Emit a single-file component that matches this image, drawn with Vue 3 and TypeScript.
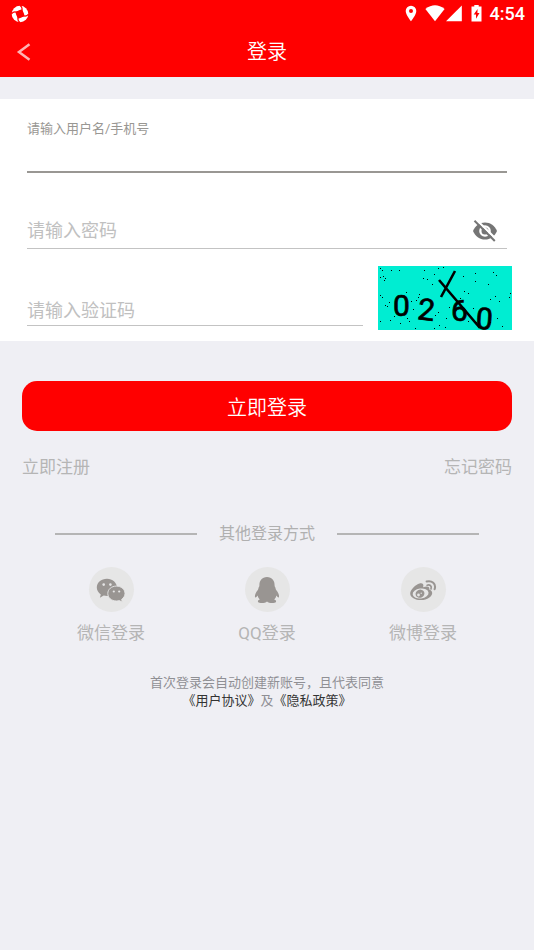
<script setup lang="ts">
import { ref } from 'vue'

const account = ref('')
const password = ref('')
const code = ref('')
const showPassword = ref(false)

const specks: number[][] = [
  [2, 2], [4, 4], [13, 4], [21, 4], [46, 4], [60, 2], [65, 1], [5, 10], [2, 11], [7, 12], [6, 14],
  [45, 12], [49, 13], [54, 18], [56, 8], [85, 10], [97, 7], [97, 15], [115, 6], [118, 9], [110, 18],
  [86, 25], [90, 27], [112, 33], [117, 30], [121, 35], [132, 27], [131, 31], [2, 29], [4, 31],
  [7, 39], [11, 36], [9, 40], [2, 55], [12, 54], [16, 50], [21, 49], [22, 57], [29, 52], [31, 55],
  [37, 62], [28, 26], [41, 28], [40, 31], [33, 35], [38, 34], [43, 38], [60, 46], [57, 49], [61, 59],
  [67, 61], [68, 52], [95, 42], [88, 45], [119, 52], [124, 60], [112, 56], [98, 56], [71, 41],
  [35, 43], [64, 18], [82, 32], [56, 62], [90, 55],
]

const providers = [
  { id: 'wechat', name: '微信登录' },
  { id: 'qq', name: 'QQ登录' },
  { id: 'weibo', name: '微博登录' },
]
</script>

<template>
  <div class="page">
    <header class="top">
      <div class="status">
        <svg class="app-mark" width="18" height="18" viewBox="0 0 18 18" aria-hidden="true">
          <circle cx="9" cy="9" r="8.300" fill="#fff" />
          <path d="M11.200 4.700L13.300 11.200 6.800 13.300 4.700 6.800Z" fill="#f00" />
          <path v-for="turn in [0, 90, 180, 270]" :key="turn" :transform="`rotate(${turn} 9 9)`" d="M5.500 7L11 4.900Q11.600 2.200 8.800 .2" fill="none" stroke="#f00" stroke-width="1.200" />
        </svg>
        <div class="signals">
          <svg width="12" height="17" viewBox="0 0 12 17" aria-hidden="true"><path d="M6 0.8A5.3 5.3 0 0 0 .7 6.1C.7 10 6 16.3 6 16.3S11.3 10 11.3 6.1A5.3 5.3 0 0 0 6 .8ZM6 8.1A2 2 0 1 1 6 4.1 2 2 0 0 1 6 8.1Z" fill="#fff" /></svg>
          <svg class="wifi" width="20" height="17" viewBox="0 0 20 17" aria-hidden="true"><path d="M.4 4.1Q10-3.4 19.6 4.1L10 16.2Z" fill="#fff" /></svg>
          <svg class="cell" width="16" height="17" viewBox="0 0 16 17" aria-hidden="true"><path d="M15.8.5V16.3H0Z" fill="#fff" /></svg>
          <svg class="battery" width="11" height="17" viewBox="0 0 11 17" aria-hidden="true"><path d="M3.3 0H7.7V1.6H10.5V16.5H.5V1.6H3.3Z" fill="#fff" /><path d="M6.6 4.1L2.7 9.5H5V13.8L8.5 8.1H6.4Z" fill="#f00" /></svg>
          <span class="clock">4:54</span>
        </div>
      </div>
      <div class="bar">
        <button class="back" type="button" aria-label="返回">
          <svg width="15" height="18" viewBox="0 0 15 18" aria-hidden="true"><path d="M13.500 1.300L3 9 13.500 16.700" fill="none" stroke="#fff" stroke-opacity=".7" stroke-width="2.500" /></svg>
        </button>
        <h1>登录</h1>
      </div>
    </header>

    <form @submit.prevent>
      <section class="card">
        <div class="field account">
          <label for="account">请输入用户名/手机号</label>
          <input id="account" v-model="account" type="text" autocomplete="username">
        </div>
        <div class="field overlay password">
          <label v-show="!password" for="password">请输入密码</label>
          <input id="password" v-model="password" :type="showPassword ? 'text' : 'password'" autocomplete="current-password">
          <button class="eye" type="button" aria-label="显示密码" @click="showPassword = !showPassword">
            <svg width="26" height="22" viewBox="0 0 26 22" aria-hidden="true">
              <path d="M1 11C3 5.8 7.8 2.4 13 2.4S23 5.8 25 11C23 16.2 18.2 19.6 13 19.6S3 16.2 1 11Z" fill="#757575" />
              <circle cx="13" cy="11" r="5.8" fill="#fff" />
              <circle cx="13" cy="11" r="3.5" fill="#757575" />
              <path d="M4.200-.4L24.600 19.600" stroke="#fff" stroke-width="2.2" />
              <path d="M2.500.7L22.800 21" stroke="#757575" stroke-width="2" />
            </svg>
          </button>
        </div>
        <div class="verify">
          <div class="field overlay">
            <label v-show="!code" for="code">请输入验证码</label>
            <input id="code" v-model="code" type="text" autocomplete="off">
          </div>
          <button class="captcha" type="button" aria-label="换一张验证码">
            <svg width="134" height="64" viewBox="0 0 134 64">
              <rect width="134" height="64" fill="#00edd2" />
              <rect v-for="(s, i) in specks" :key="i" :x="s[0]" :y="s[1]" width="1" height="1" />
              <g class="digits">
                <text x="15" y="50">0</text>
                <text x="40" y="54" transform="rotate(7 48 43)">2</text>
                <text x="73" y="55">6</text>
                <text x="98" y="63" transform="rotate(4 106 53)">0</text>
              </g>
              <path d="M61 14L102 62M77 5L63 31" fill="none" stroke="#000" stroke-width="2.6" />
            </svg>
          </button>
        </div>
      </section>

      <section class="actions">
        <button class="submit" type="submit">立即登录</button>
        <div class="links">
          <a href="#register">立即注册</a>
          <a href="#forgot">忘记密码</a>
        </div>
      </section>
    </form>

    <section class="other">
      <h2>其他登录方式</h2>
      <div class="providers">
        <button v-for="p in providers" :key="p.id" type="button">
          <span class="disc">
            <svg v-if="p.id === 'wechat'" width="30" height="26" viewBox="0 0 30 26" aria-hidden="true">
              <path d="M11 1.800C5.200 1.800.8 5.700.8 10.600c0 2.900 1.500 5.100 4 6.800L3.900 20.700l3.800-2.100c1.100.3 2.200.5 3.500.5C17 19.100 21 15.400 21 10.600S16.500 1.800 11 1.800Z" fill="#999592" />
              <circle cx="7.700" cy="7.600" r="1.300" fill="#e6e6e6" /><circle cx="14.400" cy="7.600" r="1.300" fill="#e6e6e6" />
              <path d="M20.400 9.100c-4.900 0-8.600 3.200-8.600 7.400s3.700 7.500 8.600 7.500c1.100 0 2-.1 2.900-.4l3.100 1.500-.8-2.700c2-1.500 3.400-3.500 3.400-5.900 0-4.200-3.900-7.400-8.600-7.400Z" fill="#999592" stroke="#e6e6e6" stroke-width=".9" />
              <circle cx="17.800" cy="14.500" r="1.100" fill="#e6e6e6" /><circle cx="23.200" cy="14.500" r="1.100" fill="#e6e6e6" />
            </svg>
            <svg v-else-if="p.id === 'qq'" width="26" height="28" viewBox="0 0 26 28" aria-hidden="true">
              <path d="M13 1C8 1 5.300 4.700 5.400 9.400c0 1-.4 1.600-.9 2.400-.2.700 0 1.100-.5 1.900C1.700 16.400.6 19.100 1 21c.3 1.200 1.600.1 2.500-1.500.4 1.600 1.200 2.900 2.300 3.900-1.600.5-2.300 1.500-1.700 2.600.7 1.300 6.900 1.700 8.900-.6 2 2.300 8.200 1.900 8.900.6.600-1.100-.1-2.100-1.700-2.600 1.100-1 1.900-2.300 2.300-3.900.9 1.600 2.200 2.700 2.500 1.500.4-1.900-.7-4.600-3-7.300-.5-.8-.3-1.200-.5-1.900-.5-.8-.9-1.400-.9-2.400C20.700 4.700 18 1 13 1Z" fill="#999592" />
            </svg>
            <svg v-else width="28" height="24" viewBox="0 0 28 24" aria-hidden="true">
              <path d="M10.500 5.400C6.800 6.300 1.200 11.600 1.200 15.400c0 4 5 6.600 10.700 6.600 6.700 0 11.300-3.700 11.300-7.100 0-2-1.500-3-3-3.500.8-2.800-1.700-3.900-6.100-2.200 1-2.900-.5-4.600-3.600-3.800Z" fill="#999592" />
              <ellipse cx="11.600" cy="15.500" rx="8" ry="5" transform="rotate(-8 11.600 15.500)" fill="#e6e6e6" />
              <ellipse cx="11" cy="15.700" rx="4.500" ry="4" transform="rotate(-22 11 15.700)" fill="#999592" />
              <circle cx="9.500" cy="17" r="1.400" fill="#e6e6e6" /><circle cx="12.200" cy="15.200" r=".7" fill="#e6e6e6" />
              <path d="M17.600 3.500C22.800 2 27.500 5.900 25.600 11.200" fill="none" stroke="#999592" stroke-width="2" stroke-linecap="round" />
              <path d="M18.100 7.200C21 6.300 23 8.200 22 10.900" fill="none" stroke="#999592" stroke-width="1.700" stroke-linecap="round" />
            </svg>
          </span>
          <span>{{ p.name }}</span>
        </button>
      </div>
      <p class="terms">
        首次登录会自动创建新账号，且代表同意<br>
        <a href="#agreement">《用户协议》</a>及<a href="#privacy">《隐私政策》</a>
      </p>
    </section>
  </div>
</template>

<style>
body {
  background: #efeff4;
}
</style>

<style scoped>
.page {
  min-height: 100vh;
  background: #efeff4;
  font-family: Roboto, "Noto Sans CJK SC", sans-serif;
}
.page * {
  box-sizing: border-box;
}
button {
  padding: 0;
  border: 0;
  background: none;
  font: inherit;
  cursor: pointer;
}
a {
  color: inherit;
  text-decoration: none;
}
svg {
  display: block;
}
.top {
  background: #f00;
  color: #fff;
}
.status {
  display: flex;
  justify-content: space-between;
  align-items: center;
  height: 27px;
  padding: 0 9px 0 11px;
}
.signals {
  display: flex;
  align-items: center;
}
.wifi {
  margin-left: 8px;
}
.cell {
  margin-left: 1px;
}
.battery {
  margin: 0 8px 0 9px;
}
.clock {
  font-size: 18px;
  font-weight: 500;
  line-height: 27px;
}
.bar {
  display: grid;
  grid-template-columns: 48px 1fr 48px;
  align-items: center;
  height: 50px;
}
.back {
  padding: 16px;
}
h1 {
  margin: 0;
  font-size: 20px;
  font-weight: 350;
  line-height: 50px;
  text-align: center;
}
.card {
  margin-top: 22px;
  padding: 20px 22px 11px 27px;
  background: #fff;
}
.field {
  border-bottom: 1px solid #c3c3c3;
  color: #c0c0c0;
  font-size: 18px;
}
input {
  display: block;
  width: 100%;
  min-width: 0;
  padding: 0;
  border: 0;
  outline: 0;
  background: none;
  color: #333;
  font: inherit;
}
.account {
  margin-right: 5px;
  border-bottom: 2px solid #999793;
}
.account label {
  display: block;
  color: #999793;
  font-size: 13px;
  line-height: 20px;
}
.account input {
  height: 32px;
}
.overlay {
  display: grid;
  grid-template-columns: 1fr auto;
  align-items: end;
}
.overlay label,
.overlay input {
  grid-area: 1 / 1;
}
.overlay label {
  line-height: 28px;
}
.overlay input {
  height: 36px;
}
.password {
  margin: 39px 5px 0 0;
}
.password label {
  line-height: 34px;
}
.eye {
  margin-right: 9px;
  padding-bottom: 6px;
}
.verify {
  display: flex;
  align-items: flex-end;
  gap: 15px;
  margin-top: 17px;
}
.verify .field {
  flex: 1;
  margin-bottom: 4px;
}
.captcha svg {
  overflow: visible;
}
.digits {
  font: 30px Roboto, sans-serif;
  stroke: #000;
  stroke-width: 0.7;
}
.actions {
  padding: 40px 22px 0;
}
.submit {
  width: 100%;
  height: 50px;
  border-radius: 15px;
  background: #f00;
  color: #fff;
  font-size: 20px;
  font-weight: 350;
}
.links {
  display: flex;
  justify-content: space-between;
  margin-top: 24px;
  color: #b5b5b5;
  font-size: 17px;
  line-height: 24px;
}
.other {
  padding-top: 43px;
}
h2 {
  display: flex;
  align-items: center;
  gap: 22px;
  margin: 0;
  padding: 0 55px;
  color: #b0b0b0;
  font-size: 16px;
  font-weight: 400;
  line-height: 24px;
}
h2::before,
h2::after {
  content: "";
  flex: 1;
  height: 2px;
  background: #b5b5b5;
}
.providers {
  display: flex;
  margin-top: 21px;
  padding: 0 33px;
}
.providers button {
  display: flex;
  flex: 1;
  flex-direction: column;
  align-items: center;
  gap: 9px;
  color: #b5b5b5;
  font-size: 17px;
  line-height: 24px;
}
.disc {
  display: grid;
  place-items: center;
  width: 45px;
  height: 45px;
  border-radius: 50%;
  background: #e6e6e6;
}
.terms {
  margin: 29px 0 0;
  color: #8f8f94;
  font-size: 13px;
  line-height: 18px;
  text-align: center;
}
.terms a {
  color: #333;
}
</style>
